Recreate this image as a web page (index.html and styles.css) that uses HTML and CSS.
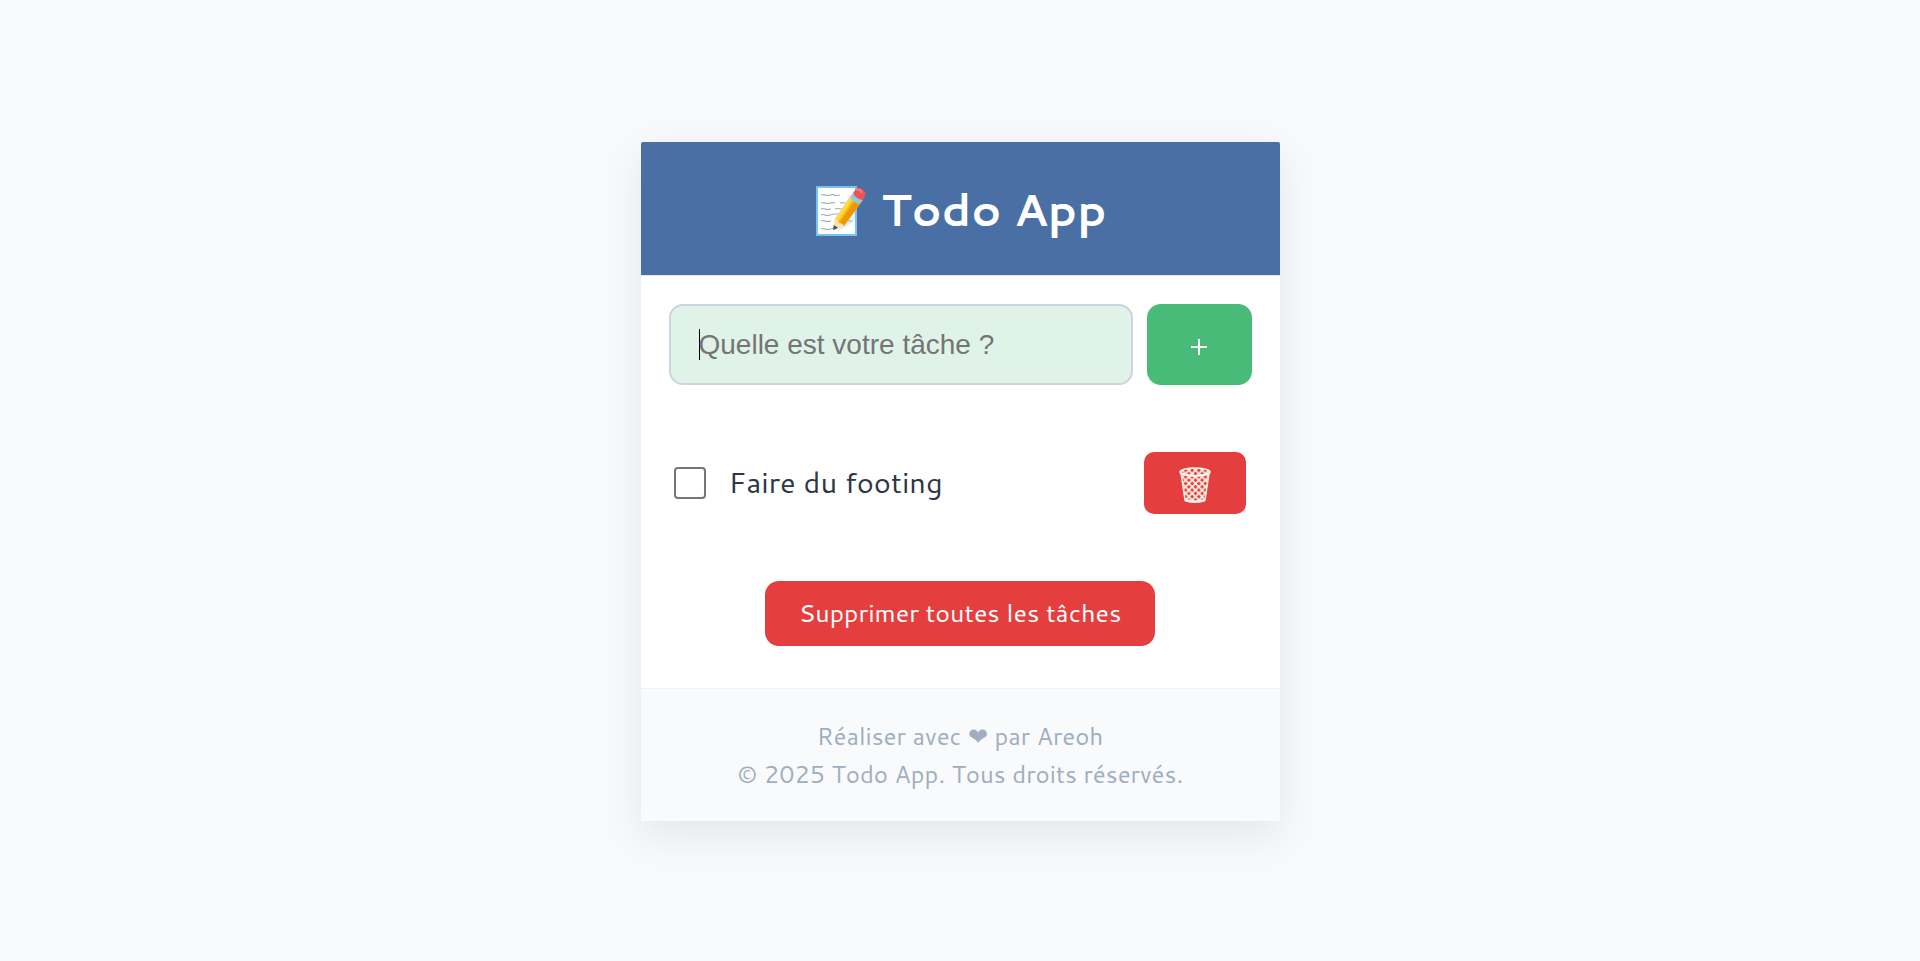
FILE: index.html
```html
<!DOCTYPE html>
<html lang="fr">
<head>
<meta charset="utf-8">
<title>Todo App</title>
<link rel="stylesheet" href="styles.css">
</head>
<body>
<main class="card">
  <header class="card-header">
    <h1 class="title">
      <svg class="memo" viewBox="0 0 50 50" aria-hidden="true">
        <rect x="1" y="1" width="39" height="48" fill="#fff" stroke="#75c3f3" stroke-width="2"/>
        <path d="M21 45 L39 21 V33 Q34 41 21 45Z" fill="#e1f3fc"/>
        <g fill="none" stroke="#9aadb8" stroke-width="1.1">
          <path d="M5 9q2-1 4 0t5 0 4 0 6 0M5 17q2-1 4 0t5 0 5 0M24 17q2-1 4 0h3M5 23q2-1 4 0t6 0M19 23q2-1 7 0M5 29q2-1 4 0t5 0 5-1h10M5 35q2-1 4 0t6 0M32 35h4M5 43q2-1 4 0t5 0 5 0"/>
        </g>
        <path d="M17 44 19 33 34 11 44 18 28 40Z" fill="#ffc00b"/>
        <path d="M24 38 28 40 44 18 40 15Z" fill="#f49306"/>
        <path d="M19 33 34 11 37 13 21 36Z" fill="#ffd84e"/>
        <path d="M24 37 39 15" stroke="#cf8b13" fill="none"/>
        <path d="M17 44 19 33Q22 34 23 37 27 37 28 40Z" fill="#ffe3b2"/>
        <path d="m17 44 1-5 4 3Z" fill="#4b4d4d"/>
        <path d="M34 11 37 7 47 14 44 18Q37 17 34 11Z" fill="#91cbdc"/>
        <path d="M37 7 40 3Q43 0 47 4 51 7 49 10L47 14Q40 13 37 7Z" fill="#ef5350"/>
        <path d="M40 4q4-2 6 3" stroke="#f47c7c" stroke-width="2" fill="none"/>
      </svg>
      <span>Todo App</span>
    </h1>
  </header>
  <form class="add-form">
    <input class="task-input" type="text" aria-label="Nouvelle tâche" placeholder="Quelle est votre tâche ?" autofocus>
    <button class="add-button" type="button" aria-label="Ajouter"><svg class="plus" viewBox="0 0 16 16" aria-hidden="true"><path d="M0 8H16M8 0V16" stroke="#fff" stroke-width="2"/></svg></button>
  </form>
  <ul class="tasks">
    <li class="task">
      <input class="task-check" type="checkbox" id="task-1">
      <label class="task-label" for="task-1">Faire du footing</label>
      <button class="delete-button" type="button" aria-label="Supprimer">
        <svg class="bin" viewBox="0 0 32 36" fill="none" stroke="#f5f3e8" aria-hidden="true">
          <defs><pattern id="mesh" width="6.6" height="6.6" patternUnits="userSpaceOnUse"><path d="M-1-1 7.6 7.6M7.6-1-1 7.6" stroke-width="1.7"/></pattern></defs>
          <path d="M2 6 6 33Q7 35 16 35T26 33L30 6Q16 12 2 6Z" fill="url(#mesh)" stroke-width="1.5"/>
          <ellipse cx="16" cy="5" rx="15" ry="4" fill="url(#mesh)" stroke-width="1.6"/>
          <path d="M6 33Q16 36 26 33" stroke-width="2.4"/>
        </svg>
      </button>
    </li>
  </ul>
  <div class="clear-row"><button class="clear-button" type="button">Supprimer toutes les tâches</button></div>
  <footer class="card-footer">
    <p>Réaliser avec ❤ par Areoh</p>
    <p>© 2025 Todo App. Tous droits réservés.</p>
  </footer>
</main>
</body>
</html>
```
FILE: styles.css
```css
* { box-sizing: border-box; }
body {
  margin: 0;
  padding-top: 2px;
  min-height: 100vh;
  display: flex;
  justify-content: center;
  align-items: center;
  background: #f7f9fd;
  color: #2d3748;
  font-family: Cantarell, "Open Sans", sans-serif;
}
.card {
  width: 100%;
  max-width: 639px;
  background: #fff;
  border-radius: 2px 2px 0 0;
  box-shadow: 0 14px 42px rgba(0, 0, 0, 0.08);
}
.card-header {
  padding: 33px 32px 31px;
  background: #4a6fa5;
  border-bottom: 1px solid #e2e8f0;
  border-radius: 2px 2px 0 0;
}
.title {
  display: flex;
  justify-content: center;
  align-items: center;
  gap: 15px;
  margin: 0;
  padding-left: 3px;
  color: #fff;
  font-size: 45px;
  line-height: 69px;
  font-weight: 600;
}
.memo { width: 50px; height: 50px; margin-top: 2px; }
.add-form { display: flex; gap: 14px; padding: 28px; }
.task-input {
  flex: 1;
  min-width: 0;
  height: 81px;
  padding: 0 28px;
  border: 2px solid #cbd5e0;
  border-radius: 14px;
  outline: none;
  background: #e0f3e8;
  caret-color: #000;
  font: 28px "Liberation Sans", Arial, sans-serif;
}
.task-input:placeholder-shown {
  background: linear-gradient(#000, #000) 28px center / 1px 31px no-repeat #e0f3e8;
}
.task-input::placeholder { color: #757575; }
.add-button, .delete-button, .clear-button {
  border: 0;
  color: #fff;
  font-family: inherit;
  background: #e53e3e;
}
.add-button { width: 105px; border-radius: 14px; background: #48bb78; padding: 8px 0 0; }
.plus { width: 16px; height: 16px; }
.tasks { margin: 0; padding: 39px 34px 39px 33px; list-style: none; }
.task { display: flex; align-items: center; }
.task-check {
  appearance: none;
  width: 32px;
  height: 32px;
  margin: 0 23px 0 0;
  border: 2px solid #767676;
  border-radius: 4px;
}
.task-label { flex: 1; padding-bottom: 2px; font-size: 29px; line-height: 48px; }
.delete-button { width: 102px; height: 62px; padding: 0; border-radius: 10px; }
.bin { display: block; width: 32px; height: 36px; margin: 4px auto 0; }
.clear-row { display: flex; justify-content: center; padding: 28px 28px 42px; }
.clear-button { padding: 15px 34px 17px; border-radius: 14px; font-size: 25px; line-height: 33px; }
.card-footer {
  padding: 28px;
  border-top: 1px solid #edf2f7;
  background: #f9fafc;
  color: #a0aec0;
  text-align: center;
  font-size: 24px;
  line-height: 38px;
}
.card-footer p { margin: 0; }
```
